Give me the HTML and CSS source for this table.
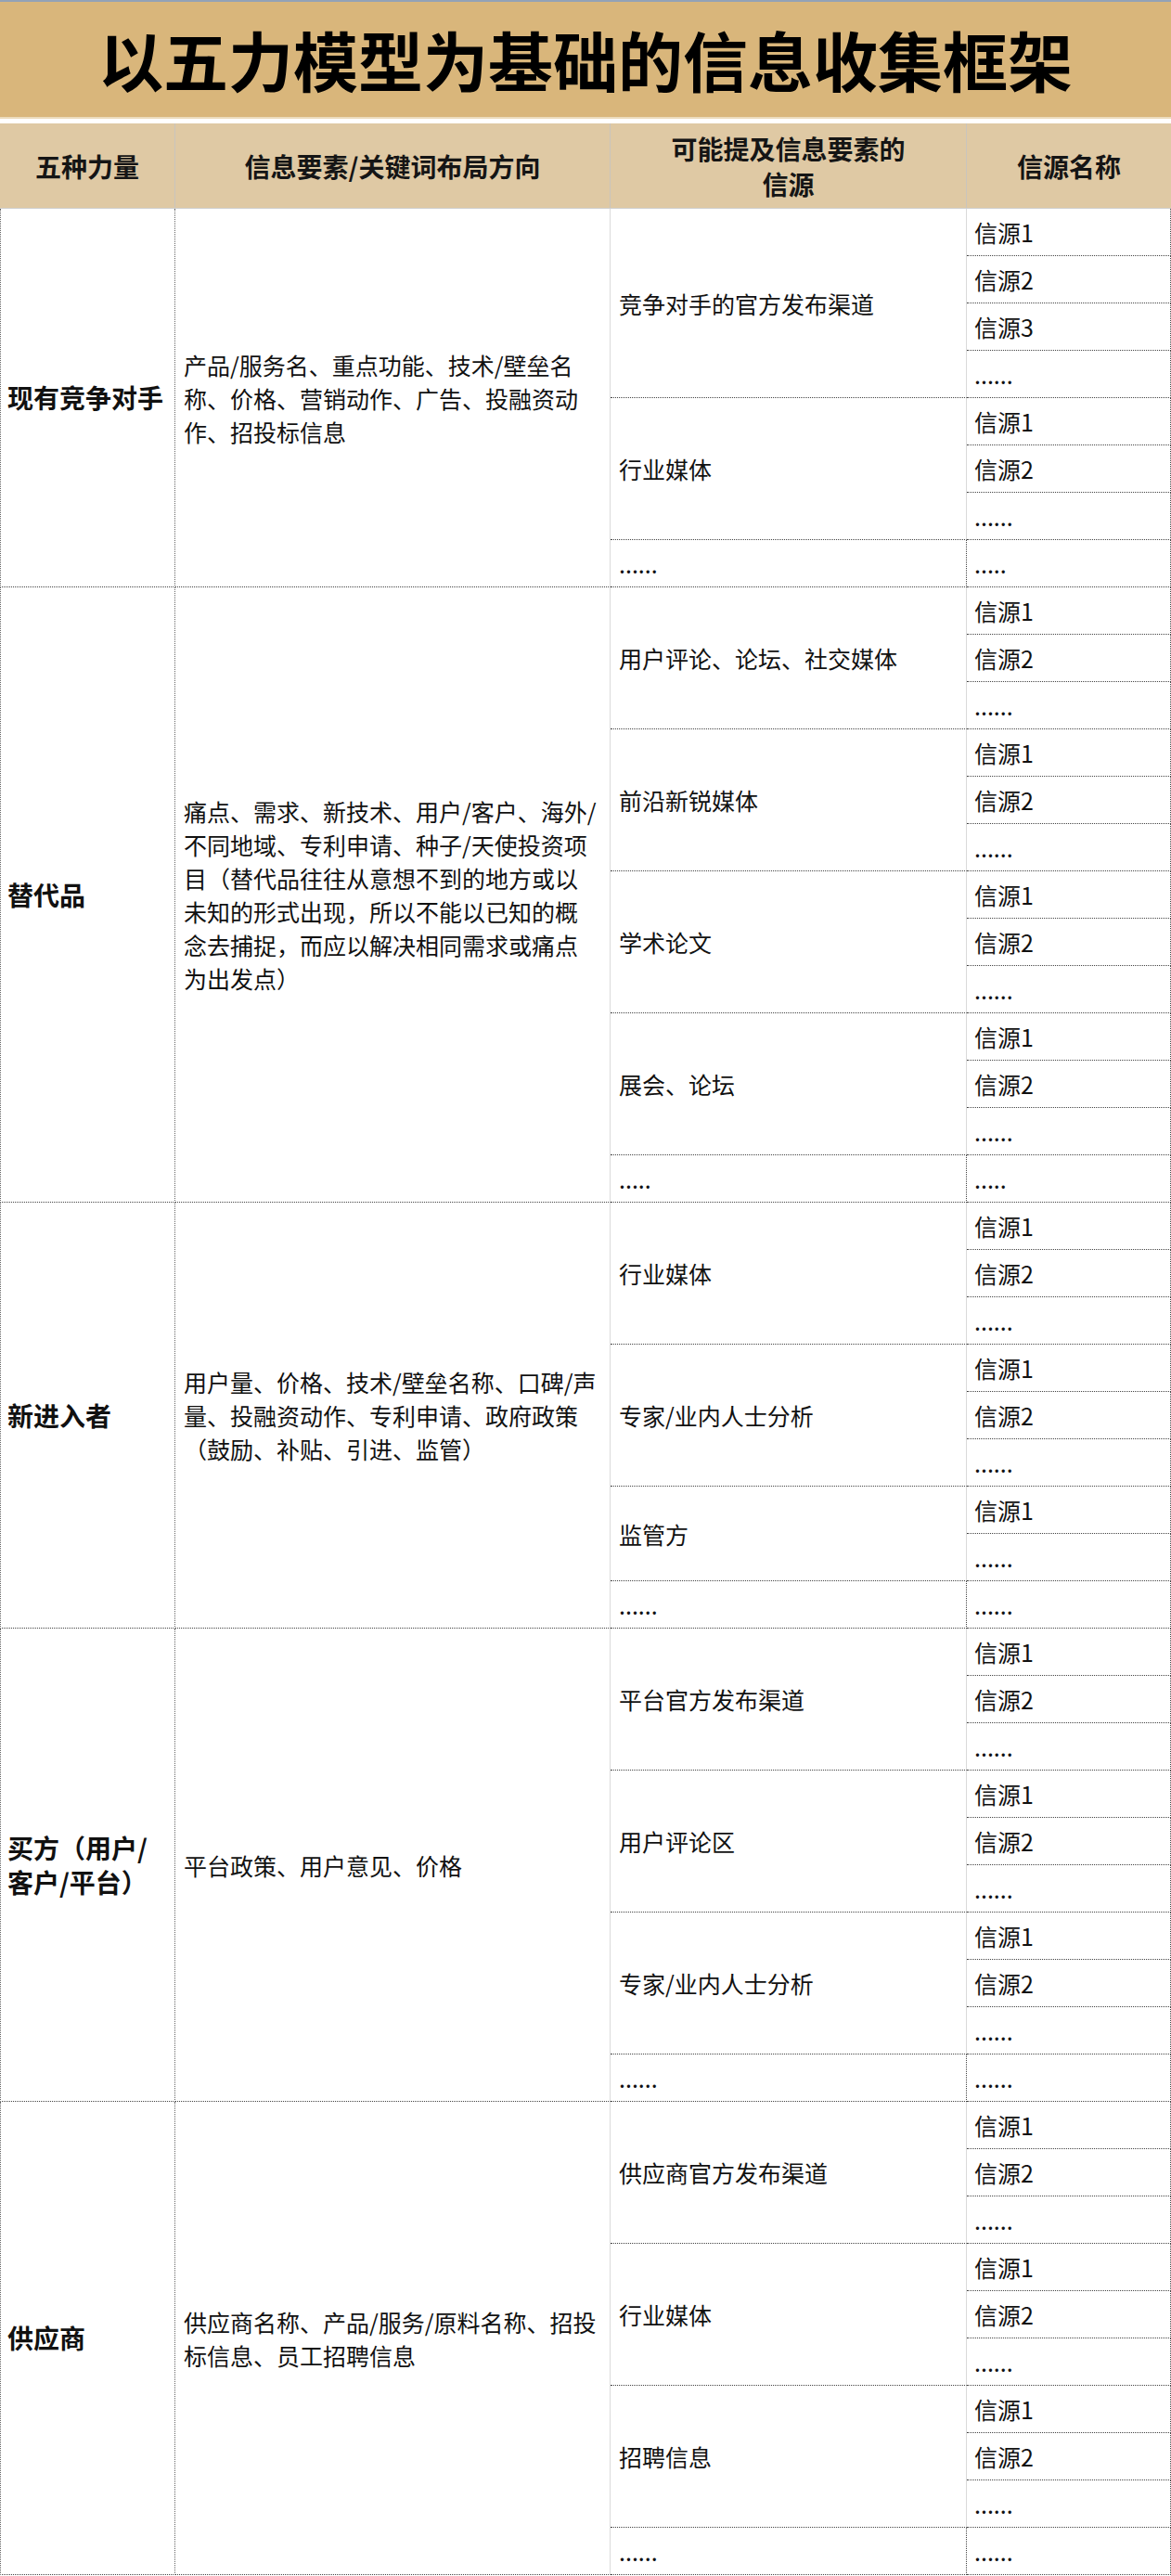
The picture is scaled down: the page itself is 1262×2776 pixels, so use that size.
FILE: index.html
```html
<!DOCTYPE html>
<html lang="zh-CN">
<head>
<meta charset="utf-8">
<title>以五力模型为基础的信息收集框架</title>
<link rel="stylesheet" href="styles.css">
</head>
<body>
<div class="sheet">
  <h1 class="title">以五力模型为基础的信息收集框架</h1>

  <div class="cols head">
    <div class="hcell">五种力量</div>
    <div class="hcell">信息要素/关键词布局方向</div>
    <div class="hcell">可能提及信息要素的<br>信源</div>
    <div class="hcell">信源名称</div>
  </div>

  <div class="cols body">
    <!-- 现有竞争对手 -->
    <div class="cell force rows-8">现有竞争对手</div>
    <div class="cell elements rows-8">产品/服务名、重点功能、技术/壁垒名<br>称、价格、营销动作、广告、投融资动<br>作、招投标信息</div>
    <div class="cell channel rows-4">竞争对手的官方发布渠道</div>
    <div class="cell source">信源1</div>
    <div class="cell source">信源2</div>
    <div class="cell source">信源3</div>
    <div class="cell source">......</div>
    <div class="cell channel rows-3">行业媒体</div>
    <div class="cell source">信源1</div>
    <div class="cell source">信源2</div>
    <div class="cell source">......</div>
    <div class="cell channel more">......</div>
    <div class="cell source">.....</div>

    <!-- 替代品 -->
    <div class="cell force rows-13">替代品</div>
    <div class="cell elements rows-13">痛点、需求、新技术、用户/客户、海外/<br>不同地域、专利申请、种子/天使投资项<br>目（替代品往往从意想不到的地方或以<br>未知的形式出现，所以不能以已知的概<br>念去捕捉，而应以解决相同需求或痛点<br>为出发点）</div>
    <div class="cell channel rows-3">用户评论、论坛、社交媒体</div>
    <div class="cell source">信源1</div>
    <div class="cell source">信源2</div>
    <div class="cell source">......</div>
    <div class="cell channel rows-3">前沿新锐媒体</div>
    <div class="cell source">信源1</div>
    <div class="cell source">信源2</div>
    <div class="cell source">......</div>
    <div class="cell channel rows-3">学术论文</div>
    <div class="cell source">信源1</div>
    <div class="cell source">信源2</div>
    <div class="cell source">......</div>
    <div class="cell channel rows-3">展会、论坛</div>
    <div class="cell source">信源1</div>
    <div class="cell source">信源2</div>
    <div class="cell source">......</div>
    <div class="cell channel more">.....</div>
    <div class="cell source">.....</div>

    <!-- 新进入者 -->
    <div class="cell force rows-9">新进入者</div>
    <div class="cell elements rows-9">用户量、价格、技术/壁垒名称、口碑/声<br>量、投融资动作、专利申请、政府政策<br>（鼓励、补贴、引进、监管）</div>
    <div class="cell channel rows-3">行业媒体</div>
    <div class="cell source">信源1</div>
    <div class="cell source">信源2</div>
    <div class="cell source">......</div>
    <div class="cell channel rows-3">专家/业内人士分析</div>
    <div class="cell source">信源1</div>
    <div class="cell source">信源2</div>
    <div class="cell source">......</div>
    <div class="cell channel rows-2">监管方</div>
    <div class="cell source">信源1</div>
    <div class="cell source">......</div>
    <div class="cell channel more">......</div>
    <div class="cell source">......</div>

    <!-- 买方 -->
    <div class="cell force rows-10">买方（用户/<br>客户/平台）</div>
    <div class="cell elements rows-10">平台政策、用户意见、价格</div>
    <div class="cell channel rows-3">平台官方发布渠道</div>
    <div class="cell source">信源1</div>
    <div class="cell source">信源2</div>
    <div class="cell source">......</div>
    <div class="cell channel rows-3">用户评论区</div>
    <div class="cell source">信源1</div>
    <div class="cell source">信源2</div>
    <div class="cell source">......</div>
    <div class="cell channel rows-3">专家/业内人士分析</div>
    <div class="cell source">信源1</div>
    <div class="cell source">信源2</div>
    <div class="cell source">......</div>
    <div class="cell channel more">......</div>
    <div class="cell source">......</div>

    <!-- 供应商 -->
    <div class="cell force rows-10">供应商</div>
    <div class="cell elements rows-10">供应商名称、产品/服务/原料名称、招投<br>标信息、员工招聘信息</div>
    <div class="cell channel rows-3">供应商官方发布渠道</div>
    <div class="cell source">信源1</div>
    <div class="cell source">信源2</div>
    <div class="cell source">......</div>
    <div class="cell channel rows-3">行业媒体</div>
    <div class="cell source">信源1</div>
    <div class="cell source">信源2</div>
    <div class="cell source">......</div>
    <div class="cell channel rows-3">招聘信息</div>
    <div class="cell source">信源1</div>
    <div class="cell source">信源2</div>
    <div class="cell source">......</div>
    <div class="cell channel more">......</div>
    <div class="cell source">......</div>
  </div>
</div>
</body>
</html>
```

FILE: styles.css
```css
* {
  box-sizing: border-box;
}

body {
  margin: 0;
  background: #ffffff;
  color: #111111;
  font-family: "Noto Sans CJK SC", "Noto Sans", "Liberation Sans", sans-serif;
}

.sheet {
  width: 1262px;
}

.title {
  margin: 0;
  height: 128px;
  border-top: 2px solid #93a2b6;
  border-bottom: 2px solid #ecdcbd;
  background: #d9b67b;
  display: flex;
  align-items: center;
  justify-content: center;
  font-size: 70px;
  font-weight: 700;
  line-height: 1;
  color: #000000;
}

.cols {
  display: grid;
  grid-template-columns: 189px 469px 384px 220px;
}

.head {
  margin-top: 5px;
  height: 92px;
  background: #dfc9a4;
  border-bottom: 1px solid #cfcfcf;
}

.hcell {
  display: flex;
  align-items: center;
  justify-content: center;
  text-align: center;
  font-size: 28px;
  font-weight: 700;
  line-height: 38px;
  color: #151515;
  border-right: 1px solid #c9c5bd;
}

.hcell:last-child {
  border-right: none;
}

.body {
  grid-auto-rows: 51px;
}

.cell {
  display: flex;
  align-items: center;
  padding: 0 8px;
  font-size: 25px;
  line-height: 36px;
  border-bottom: 1px dotted #444444;
  white-space: nowrap;
}

.force {
  grid-column: 1;
  padding-left: 7px;
  font-size: 28px;
  font-weight: 700;
  line-height: 37px;
  border-left: 1px dotted #666666;
  border-right: 1px dotted #666666;
}

.elements {
  grid-column: 2;
  padding-left: 9px;
  border-right: 1px solid #dadada;
}

.channel {
  grid-column: 3;
  padding-left: 9px;
  border-right: 1px solid #dadada;
}

.channel.more {
  border-right: 1px dotted #444444;
}

.source {
  grid-column: 4;
  padding-left: 8px;
  border-right: 1px dotted #444444;
}

.rows-2 { grid-row: span 2; }
.rows-3 { grid-row: span 3; }
.rows-4 { grid-row: span 4; }
.rows-8 { grid-row: span 8; }
.rows-9 { grid-row: span 9; }
.rows-10 { grid-row: span 10; }
.rows-13 { grid-row: span 13; }
```
